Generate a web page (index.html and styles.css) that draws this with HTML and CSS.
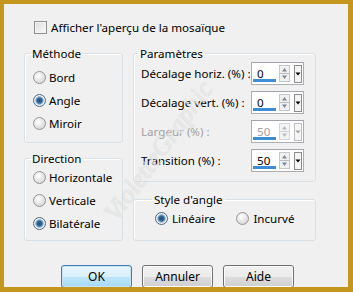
FILE: index.html
```html
<!DOCTYPE html>
<html lang="fr">

<head>
    <meta charset="UTF-8">
    <title>Mosaïque</title>
    <link rel="stylesheet" href="styles.css">
</head>

<body>
    <div class="dialog">
        <label class="check-row"><span class="checkbox"></span>Afficher l'aperçu de la mosaïque</label>

        <div class="columns">
            <div class="col col-left">
                <fieldset class="group group-method">
                    <legend>Méthode</legend>
                    <label class="radio-row"><span class="radio"></span>Bord</label>
                    <label class="radio-row"><span class="radio checked"></span>Angle</label>
                    <label class="radio-row"><span class="radio"></span>Miroir</label>
                </fieldset>

                <fieldset class="group group-direction">
                    <legend>Direction</legend>
                    <label class="radio-row"><span class="radio"></span>Horizontale</label>
                    <label class="radio-row"><span class="radio"></span>Verticale</label>
                    <label class="radio-row"><span class="radio checked"></span>Bilatérale</label>
                </fieldset>
            </div>

            <div class="col col-right">
                <fieldset class="group group-params">
                    <legend>Paramètres</legend>
                    <div class="param-row">
                        <span class="param-label">Décalage horiz. (%) :</span>
                        <div class="spin">
                            <span class="spin-value">0</span>
                            <svg class="spin-arrows" width="11" height="17" viewBox="0 0 11 17">
                                <rect x="0.5" y="0.5" width="10" height="16" fill="#eef0f2" stroke="#c3c8cc"/>
                                <line x1="1" y1="8.5" x2="10" y2="8.5" stroke="#b8bec4"/>
                                <path d="M3 6.5 L5.5 3 L8 6.5 Z" fill="#7d8a96"/>
                                <path d="M3 10.5 L5.5 14 L8 10.5 Z" fill="#7d8a96"/>
                            </svg>
                            <svg class="spin-drop" width="8" height="18" viewBox="0 0 8 18">
                                <rect x="0.5" y="0.5" width="7" height="17" fill="#f4f4f4" stroke="#8c8c8c"/>
                                <path d="M1.5 7.5 L6.5 7.5 L4 10.5 Z" fill="#000"/>
                            </svg>
                        </div>
                    </div>
                    <div class="param-row">
                        <span class="param-label">Décalage vert. (%) :</span>
                        <div class="spin">
                            <span class="spin-value">0</span>
                            <svg class="spin-arrows" width="11" height="17" viewBox="0 0 11 17">
                                <rect x="0.5" y="0.5" width="10" height="16" fill="#eef0f2" stroke="#c3c8cc"/>
                                <line x1="1" y1="8.5" x2="10" y2="8.5" stroke="#b8bec4"/>
                                <path d="M3 6.5 L5.5 3 L8 6.5 Z" fill="#7d8a96"/>
                                <path d="M3 10.5 L5.5 14 L8 10.5 Z" fill="#7d8a96"/>
                            </svg>
                            <svg class="spin-drop" width="8" height="18" viewBox="0 0 8 18">
                                <rect x="0.5" y="0.5" width="7" height="17" fill="#f4f4f4" stroke="#8c8c8c"/>
                                <path d="M1.5 7.5 L6.5 7.5 L4 10.5 Z" fill="#000"/>
                            </svg>
                        </div>
                    </div>
                    <div class="param-row disabled">
                        <span class="param-label">Largeur (%) :</span>
                        <div class="spin">
                            <span class="spin-value">50</span>
                            <svg class="spin-arrows" width="11" height="17" viewBox="0 0 11 17">
                                <rect x="0.5" y="0.5" width="10" height="16" fill="#f2f3f4" stroke="#d4d7da"/>
                                <line x1="1" y1="8.5" x2="10" y2="8.5" stroke="#d0d4d8"/>
                                <path d="M3 6.5 L5.5 3 L8 6.5 Z" fill="#b4bcc4"/>
                                <path d="M3 10.5 L5.5 14 L8 10.5 Z" fill="#b4bcc4"/>
                            </svg>
                            <svg class="spin-drop" width="8" height="18" viewBox="0 0 8 18">
                                <rect x="0.5" y="0.5" width="7" height="17" fill="#f6f6f6" stroke="#bdbdbd"/>
                                <path d="M1.5 7.5 L6.5 7.5 L4 10.5 Z" fill="#a0a0a0"/>
                            </svg>
                        </div>
                    </div>
                    <div class="param-row">
                        <span class="param-label">Transition (%) :</span>
                        <div class="spin">
                            <span class="spin-value">50</span>
                            <svg class="spin-arrows" width="11" height="17" viewBox="0 0 11 17">
                                <rect x="0.5" y="0.5" width="10" height="16" fill="#eef0f2" stroke="#c3c8cc"/>
                                <line x1="1" y1="8.5" x2="10" y2="8.5" stroke="#b8bec4"/>
                                <path d="M3 6.5 L5.5 3 L8 6.5 Z" fill="#7d8a96"/>
                                <path d="M3 10.5 L5.5 14 L8 10.5 Z" fill="#7d8a96"/>
                            </svg>
                            <svg class="spin-drop" width="8" height="18" viewBox="0 0 8 18">
                                <rect x="0.5" y="0.5" width="7" height="17" fill="#f4f4f4" stroke="#8c8c8c"/>
                                <path d="M1.5 7.5 L6.5 7.5 L4 10.5 Z" fill="#000"/>
                            </svg>
                        </div>
                    </div>
                </fieldset>

                <fieldset class="group group-style">
                    <legend>Style d'angle</legend>
                    <div class="radio-inline">
                        <label class="radio-row"><span class="radio checked"></span>Linéaire</label>
                        <label class="radio-row"><span class="radio"></span>Incurvé</label>
                    </div>
                </fieldset>
            </div>
        </div>

        <div class="buttons">
            <button class="btn btn-default">OK</button>
            <button class="btn">Annuler</button>
            <button class="btn">Aide</button>
        </div>

        <!-- watermark over the dialog -->
        <span class="watermark">VioletteGraphic</span>
    </div>
</body>

</html>
```

FILE: styles.css
```css
* {
    box-sizing: border-box;
    margin: 0;
    padding: 0;
}

body {
    font-family: "Noto Sans", "Open Sans", sans-serif;
    font-size: 11.6px;
    line-height: 15px;
    color: #000;
    background-color: #f0f0f0;
}

.dialog {
    position: relative;
    width: 353px;
    height: 292px;
    border-style: solid;
    border-color: #c4961d;
    border-width: 4px 5px 5px 4px;
    background-color: #f0f0f0;
    overflow: hidden;
}

/* checkbox line at the top */
.check-row {
    display: flex;
    align-items: center;
    height: 15px;
    margin: 16px 0 0 30px;
}

.checkbox {
    width: 13px;
    height: 13px;
    margin-right: 4px;
    border: 1px solid #8e8f8f;
    background: linear-gradient(135deg, #dcdcdc, #fbfbfb);
    box-shadow: inset 0 0 0 1px #f4f4f4;
}

.columns {
    display: flex;
    gap: 10px;
    margin: 11px 0 0 20px;
}

.col {
    display: flex;
    flex-direction: column;
}

.col-left {
    width: 99px;
    gap: 8px;
}

.col-right {
    width: 183px;
    gap: 10px;
}

/* group boxes */
.group {
    border: 1px solid #d9e1e6;
    border-radius: 3px;
    box-shadow: inset 1px 1px 0 #fff;
    padding: 0 8px;
    min-width: 0;
}

.group legend {
    padding: 0 2px;
    margin-left: -3px;
    line-height: 15px;
}

.group-method {
    padding-top: 5px;
    padding-bottom: 7px;
}

.group-direction {
    padding-top: 0;
    padding-bottom: 5px;
}

.radio-row {
    display: flex;
    align-items: center;
    height: 23px;
    white-space: nowrap;
}

.radio {
    flex: none;
    width: 13px;
    height: 13px;
    margin-right: 3px;
    border-radius: 50%;
    border: 1px solid #959595;
    background: radial-gradient(circle at 40% 35%, #ffffff, #d6d6d6 80%);
}

.radio.checked {
    border-color: #4f6a80;
    background: radial-gradient(circle at 50% 50%, #2a4f72 0, #2f6a9c 2.5px, #9ec0dc 4px, #f4f4f4 4.6px, #dedede 100%);
}

/* parameters */
.group-params {
    padding: 1px 11px 9px 7px;
    display: flex;
    flex-direction: column;
    gap: 6px;
}

.param-row {
    display: flex;
    align-items: center;
    justify-content: space-between;
    height: 23px;
    white-space: nowrap;
}

.param-row.disabled .param-label,
.param-row.disabled .spin-value {
    color: #a0a0a0;
}

.spin {
    flex: none;
    display: flex;
    align-items: center;
    width: 53px;
    height: 23px;
    padding: 0 1px 0 1px;
    border: 1px solid #abadb3;
    border-top-color: #a1a4aa;
    background-color: #fff;
}

.spin-value {
    position: relative;
    flex: 1;
    height: 100%;
    padding: 3px 0 0 4px;
}

.spin-value::after {
    content: '';
    position: absolute;
    left: 0;
    right: 0;
    bottom: 2px;
    height: 3px;
    background-color: #3c8dd6;
}

.spin-arrows {
    flex: none;
    margin-left: 3px;
}

.spin-drop {
    flex: none;
    margin-left: 4px;
}

.group-style {
    padding: 0 8px 10px 21px;
}

.radio-inline {
    display: flex;
    gap: 21px;
}

.radio-inline .radio {
    margin-right: 4px;
}

/* bottom buttons */
.buttons {
    display: flex;
    gap: 10px;
    margin: 24px 0 0 57px;
}

.btn {
    width: 71px;
    height: 23px;
    font-family: inherit;
    font-size: 12px;
    color: #000;
    border: 1px solid #707070;
    border-radius: 3px;
    background: linear-gradient(#f2f2f2 0%, #ebebeb 50%, #dddddd 51%, #cfcfcf 100%);
    box-shadow: inset 0 0 0 1px #fcfcfc;
}

.btn-default {
    border-color: #3c7fb1;
    background: linear-gradient(#eaf6fd 0%, #d9f0fc 50%, #bee6fd 51%, #a7d9f5 100%);
    box-shadow: inset 0 0 0 1px #c4e5f6;
}

.watermark {
    position: absolute;
    left: 40px;
    top: 132px;
    width: 230px;
    text-align: center;
    font-family: "Liberation Serif", serif;
    font-style: italic;
    font-size: 26px;
    line-height: 30px;
    color: rgba(255, 255, 255, 0.6);
    text-shadow: 0 0 1px rgba(140, 140, 140, 0.45);
    transform: rotate(-54deg);
    pointer-events: none;
}
```
